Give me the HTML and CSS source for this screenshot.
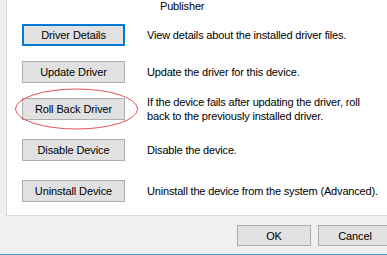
FILE: index.html
```html
<!DOCTYPE html>
<html lang="en">
<head>
    <meta charset="UTF-8">
    <title>Driver Properties</title>
    <link rel="stylesheet" href="styles.css">
</head>
<body>
    <div class="dialog">
        <!-- Driver tab page -->
        <div class="panel">
            <div class="publisher">Publisher</div>

            <div class="actions">
                <div class="row">
                    <button class="btn btn-focus">Driver Details</button>
                    <div class="desc">View details about the installed driver files.</div>
                </div>
                <div class="row">
                    <button class="btn">Update Driver</button>
                    <div class="desc">Update the driver for this device.</div>
                </div>
                <div class="row row-tall">
                    <button class="btn">Roll Back Driver</button>
                    <div class="desc desc-wrap">If the device fails after updating the driver, roll back to the previously installed driver.</div>
                </div>
                <div class="row row-after-tall">
                    <button class="btn">Disable Device</button>
                    <div class="desc">Disable the device.</div>
                </div>
                <div class="row row-last">
                    <button class="btn">Uninstall Device</button>
                    <div class="desc">Uninstall the device from the system (Advanced).</div>
                </div>
            </div>
        </div>

        <!-- Dialog buttons -->
        <div class="footer">
            <button class="btn btn-dialog">OK</button>
            <button class="btn btn-dialog">Cancel</button>
        </div>
        <div class="accent"></div>

        <!-- Red annotation circle -->
        <svg class="mark" width="387" height="255" viewBox="0 0 387 255">
            <ellipse cx="76.5" cy="109" rx="61" ry="20" fill="none" stroke="#e8505a" stroke-width="1"/>
        </svg>
    </div>
</body>
</html>
```

FILE: styles.css
```css
/* Base */
body {
    margin: 0;
    background: #f0f0f0;
    font-family: "Liberation Sans", Arial, sans-serif;
    font-size: 11px;
    color: #000;
    overflow: hidden;
}

.dialog {
    position: relative;
    width: 387px;
    height: 255px;
    overflow: hidden;
}

/* Tab page */
.panel {
    margin-left: 6px;
    height: 216px;
    box-sizing: border-box;
    background: #fff;
    border-left: 1px solid #dadada;
    border-bottom: 1px solid #dadada;
}

.publisher {
    padding-left: 153px;
    line-height: 13px;
    letter-spacing: -0.17px;
}

.actions {
    display: flex;
    flex-direction: column;
    padding-left: 15px;
    margin-top: 11px;
}

.row {
    display: flex;
    align-items: center;
    gap: 22px;
}

.row + .row {
    margin-top: 15px;
}

.row.row-tall {
    margin-top: 12px;
}

.row.row-after-tall {
    margin-top: 16px;
}

.row.row-last {
    margin-top: 19px;
}

.desc {
    white-space: nowrap;
    line-height: 14px;
    letter-spacing: -0.17px;
}

.desc-wrap {
    white-space: normal;
    max-width: 225px;
}

/* Buttons */
.btn {
    flex-shrink: 0;
    width: 103px;
    height: 22px;
    box-sizing: border-box;
    padding: 0;
    background: #e1e1e1;
    border: 1px solid #adadad;
    font-family: inherit;
    font-size: 11px;
    letter-spacing: -0.1px;
    color: #000;
}

.btn-focus {
    border: 2px solid #0078d7;
}

/* Footer */
.footer {
    display: flex;
    gap: 7px;
    height: 38px;
    box-sizing: border-box;
    padding: 9px 0 0 237px;
}

.btn-dialog {
    width: 74px;
    height: 21px;
}

.accent {
    height: 1px;
    background: #3d9ae8;
}

/* Annotation */
.mark {
    position: absolute;
    left: 0;
    top: 0;
    pointer-events: none;
}
```
